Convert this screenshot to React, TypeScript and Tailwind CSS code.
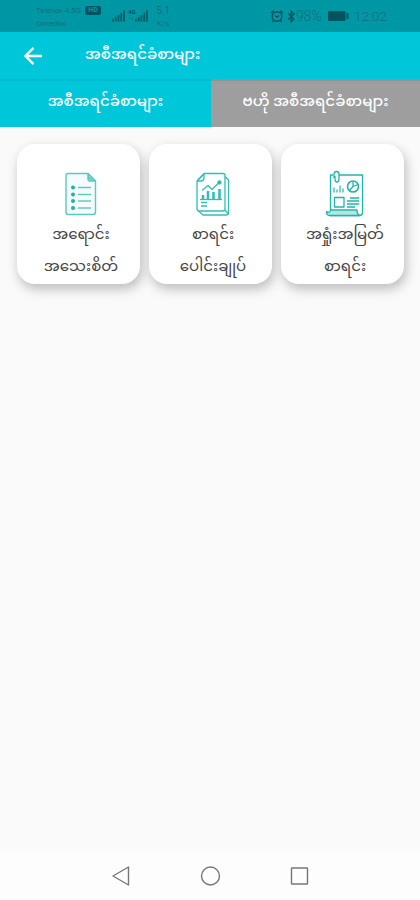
import type { ReactNode } from 'react';

interface Report {
  id: string;
  lines: [string, string];
  icon: ReactNode;
}

function Signal() {
  return (
    <svg width="13" height="12" viewBox="0 0 14 12" fill="#03606b">
      <rect x="0" y="9" width="2" height="3" />
      <rect x="3" y="7" width="2" height="5" />
      <rect x="6" y="5" width="2" height="7" />
      <rect x="9" y="2.5" width="2" height="9.5" />
      <rect x="12" y="0" width="2" height="12" />
    </svg>
  );
}

function StatusBar() {
  return (
    <div className="flex h-8 bg-[#0097a5] pl-9 pr-[33px] text-[#08707c]">
      <div className="w-[76px] shrink-0 pt-1 text-[8px] leading-[13px]">
        <div className="flex items-center whitespace-nowrap">
          <span className="w-[48px]">Telenor 4.5G</span>
          <span className="ml-px flex h-[9px] w-4 items-center justify-center rounded-[2px] bg-[#03545f] text-[7px] font-bold leading-none text-[#0097a5]">HD</span>
        </div>
        <div>Ooredoo</div>
      </div>
      <div className="flex h-[22px] items-end">
        <Signal />
        <div className="ml-[3px] w-[7px] pb-px text-[6px] font-bold leading-[6px] text-[#03545f]">4G<br />↑↓</div>
        <Signal />
      </div>
      <div className="ml-[7px] w-[16px] pt-[5px] text-center text-[10px] leading-[12px]">5.1<br /><span className="text-[8px]">K/s</span></div>
      <div className="ml-auto flex items-center">
        <svg width="14" height="14" viewBox="0 0 14 14" fill="none" stroke="#03545f" strokeWidth="1.4">
          <circle cx="7" cy="7.5" r="4.8" />
          <path d="M1 4 3.8 1.6M13 4 10.2 1.6M4.8 6.5 7 8.2l2.2-1.7M3.5 11.5 2.3 13M10.5 11.5l1.2 1.5" />
        </svg>
        <svg className="ml-[3px]" width="9" height="13" viewBox="0 0 9 13" fill="none" stroke="#03545f" strokeWidth="1.4">
          <path d="M1.2 3.6 7 8.9 4.2 11.7V1.3L7 4.1 1.2 9.4" />
        </svg>
        <span className="w-[29px] text-[14px] font-light tracking-[-0.2px]">98%</span>
        <svg className="ml-[3px]" width="21" height="10" viewBox="0 0 21 10" fill="#03545f">
          <rect width="17.5" height="10" rx="1" />
          <rect x="18.5" y="2" width="2" height="6" rx="0.6" />
        </svg>
        <span className="ml-[5px] w-[33px] whitespace-nowrap text-[13.5px] font-light">12:02</span>
      </div>
    </div>
  );
}

function DetailIcon() {
  return (
    <svg width="34" height="46" viewBox="0 0 34 46" fill="none" stroke="#5cc8bf" strokeWidth="1.4" strokeLinejoin="round">
      <path d="M24 2.500H4Q2 2.500 2 4.500V41Q2 43.500 4 43.500H29Q31.500 43.500 31.500 41V10Z" fill="#f3fbfb" />
      <path d="M24 2.500V8Q24 10 26 10H31.500ZM24.500 6 29 10" fill="#9bddd7" />
      {[16.5, 23.5, 30, 37].map(y => (
        <g key={y}>
          <circle cx="9" cy={y} r="2" fill="#20b2a6" stroke="none" />
          <path d={`M14 ${y}h13`} />
        </g>
      ))}
    </svg>
  );
}

function SummaryIcon() {
  return (
    <svg width="36" height="46" viewBox="0 0 36 46" fill="none" stroke="#35bdb5" strokeWidth="1.3" strokeLinejoin="round">
      <path d="M9 2.500H28Q30 2.500 30 4.500V38Q30 40 28 40H4Q2 40 2 38V10Z" />
      <path d="M9 3V7Q9 10 6 10H2M3 9 8 4" />
      <path d="M30 5.500 33.500 9V42Q33.500 44 31 44H8L3.500 40M30 39 33 42.500" />
      <path d="M5 28.500H27" />
      <path d="M7 19.500 13 14.500 17 18.500 24 11.500" />
      <circle cx="24.500" cy="11.500" r="1.5" fill="#20b5ac" />
      <path strokeWidth="2.6" d="M8 28v-4M13 28v-8M18.500 28v-7M24.500 28v-10" />
      <path d="M6 31.500h6M6 35h6" />
    </svg>
  );
}

function ProfitIcon() {
  return (
    <svg width="40" height="48" viewBox="0 0 40 48" fill="none" stroke="#20b5ac" strokeWidth="1.3" strokeLinejoin="round">
      <path d="M8 5H5.500V40M14 5H37.500V42.500Q37.500 45.500 34.500 45.500H5Q1.500 45.500 1.500 41" />
      <path fill="#b4e6e2" d="M5.500 40H32Q31.500 43 34.500 45.500H5Q1.500 45.500 1.500 42Q5.500 43 5.500 40Z" />
      <path d="M9 8V4Q9 1.500 11.500 1.500T14 4V9Q14 12 12 12T10 9V6" />
      <circle cx="28" cy="16.500" r="5.5" strokeWidth="1.6" />
      <path d="M28 16.500V11M28 16.500 33 14.500M28 16.500 24 21" />
      <path d="M9 22.500v-5M12 22.500v-3M15 22.500v-7M18 22.500v-4" strokeWidth="1.2" />
      <rect x="9.500" y="27.500" width="9.500" height="9.500" />
      <path d="M25 28H34M22 31H34M22 34H34M22 37H30" />
    </svg>
  );
}

const REPORTS: Report[] = [
  { id: 'detail',  lines: ['အရောင်း', 'အသေးစိတ်'], icon: <DetailIcon /> },
  { id: 'summary', lines: ['စာရင်း', 'ပေါင်းချုပ်'], icon: <SummaryIcon /> },
  { id: 'profit',  lines: ['အရှုံးအမြတ်', 'စာရင်း'], icon: <ProfitIcon /> },
];

export default function App() {
  return (
    <div className="flex h-[900px] w-[420px] flex-col overflow-hidden bg-[#fafafa] font-[Roboto,'Noto_Sans_Myanmar','Noto_Sans',sans-serif]">
      <StatusBar />

      {/* App bar */}
      <header className="flex h-[47px] items-center bg-[#00c6da] pl-6">
        <svg width="19" height="20" viewBox="0 0 20 20" fill="none" stroke="white" strokeWidth="2.4">
          <path d="M19 10H2M10 1.500 1.500 10 10 18.500" />
        </svg>
        <h1 className="ml-[42px] whitespace-nowrap pb-[2px] text-[15px] font-medium leading-none text-white">အစီအရင်ခံစာများ</h1>
      </header>

      {/* Tabs */}
      <div className="flex h-12 shrink-0 text-[15px] font-medium text-white">
        <div className="flex w-[211px] items-center justify-center border-t-2 border-[#00bacd] bg-[#00c6da] pb-[6px] leading-none">အစီအရင်ခံစာများ</div>
        <div className="flex flex-1 items-center justify-center whitespace-nowrap border-t-2 border-[#929292] bg-[#9e9e9e] pb-[6px] leading-none">ဗဟို အစီအရင်ခံစာများ</div>
      </div>

      {/* Report cards */}
      <main className="flex flex-1 items-start gap-[9px] pl-[17px] pt-[17px]">
        {REPORTS.map(r => (
          <div key={r.id} className="flex h-[140px] w-[123px] flex-col items-center rounded-[18px] bg-white pl-[5px] pt-[26px] shadow-[2px_5px_12px_rgba(0,0,0,0.25)]">
            <div className="flex h-[48px] items-center">{r.icon}</div>
            <div className="whitespace-nowrap text-center text-[15px] leading-[32px] text-[#444]">
              <div>{r.lines[0]}</div>
              <div>{r.lines[1]}</div>
            </div>
          </div>
        ))}
      </main>

      {/* System navigation */}
      <nav className="flex h-12 items-center bg-[#fdfdfd] pl-[111px]">
        <svg width="198" height="22" viewBox="0 0 198 22" fill="none" stroke="#777" strokeWidth="1.4" strokeLinejoin="round">
          <path d="M17.500 2V20L2 11Z" />
          <circle cx="99.500" cy="11" r="9" />
          <rect x="180.500" y="3" width="16" height="16" rx="0.500" />
        </svg>
      </nav>
    </div>
  );
}
